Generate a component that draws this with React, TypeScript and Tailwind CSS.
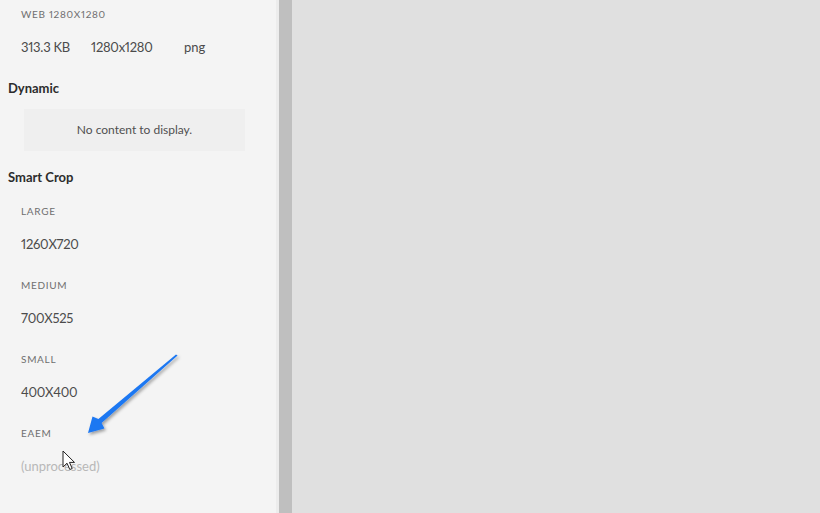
import React from 'react';

const font = { fontFamily: '"Lato", "Liberation Sans", sans-serif' };

const crops = [
  { label: 'LARGE', value: '1260X720' },
  { label: 'MEDIUM', value: '700X525' },
  { label: 'SMALL', value: '400X400' },
  { label: 'EAEM', value: '(unprocessed)', muted: true },
];

const Label: React.FC<{ children: React.ReactNode; className?: string }> = ({ children, className = '' }) => (
  <div className={`pl-[21px] text-[10px] leading-[14px] tracking-[0.07em] text-[#6f6f6f] ${className}`}>{children}</div>
);

const App: React.FC = () => {
  return (
    <div className="flex h-[513px] w-[820px] overflow-hidden proportional-nums" style={font}>
      {/* Sidebar */}
      <aside className="relative w-[279px] shrink-0 bg-[#f4f4f4] border-r-[3px] border-[#ececec]">
        <Label className="mt-[7px] tracking-[0.03em]">WEB 1280X1280</Label>
        <div className="mt-[17px] flex pl-[21px] text-[13px] leading-[18px] text-[#4b4b4b]">
          <span className="w-[70px] tracking-[-0.02em]">313.3 KB</span>
          <span className="w-[93px] tracking-[-0.02em]">1280x1280</span>
          <span>png</span>
        </div>

        <h3 className="mt-[23px] pl-[8px] text-[13px] font-bold leading-[18px] text-[#2c2c2c]">Dynamic</h3>
        <div className="mx-[24px] mt-[12px] flex h-[42px] w-[221px] items-center justify-center bg-[#efefef] text-[12px] text-[#505050]">
          No content to display.
        </div>

        <h3 className="mt-[17px] pl-[8px] text-[13px] font-bold leading-[18px] text-[#2c2c2c]">Smart Crop</h3>
        {crops.map((c, i) => (
          <div key={c.label} className={i === 0 ? 'mt-[18px]' : 'mt-[25px]'}>
            <Label>{c.label}</Label>
            <div
              className={`mt-[17px] pl-[21px] text-[13px] leading-[18px] ${c.muted ? 'text-[#b8b8b8]' : 'text-[#4b4b4b] tracking-[-0.02em]'}`}
            >
              {c.value}
            </div>
          </div>
        ))}

        {/* Annotation arrow */}
        <svg className="pointer-events-none absolute left-0 top-0" width="279" height="513">
          <defs>
            <filter id="sh" x="-20%" y="-20%" width="140%" height="140%">
              <feDropShadow dx="1.5" dy="2" stdDeviation="1.5" floodColor="#000" floodOpacity="0.35" />
            </filter>
          </defs>
          <polygon
            points="176,354.4 98.4,419.1 92.5,416.5 88,433 104.5,428.5 101.6,422.9 177.6,355.6"
            fill="#1f78f2"
            filter="url(#sh)"
          />
        </svg>

        {/* Mouse cursor */}
        <svg className="pointer-events-none absolute left-[62px] top-[450px]" width="14" height="22" viewBox="0 0 14 22">
          <path d="M1 1 L1 17 L5 13.2 L7.8 19.5 L10.2 18.5 L7.5 12.4 L12.5 12.4 Z" fill="#fff" stroke="#222" strokeWidth="1" strokeLinejoin="round" />
        </svg>
      </aside>

      {/* Divider */}
      <div className="w-[13px] shrink-0 bg-[#bfbfbf]" />

      {/* Main canvas */}
      <main className="flex-1 bg-[#e0e0e0]" />
    </div>
  );
};

export default App;
